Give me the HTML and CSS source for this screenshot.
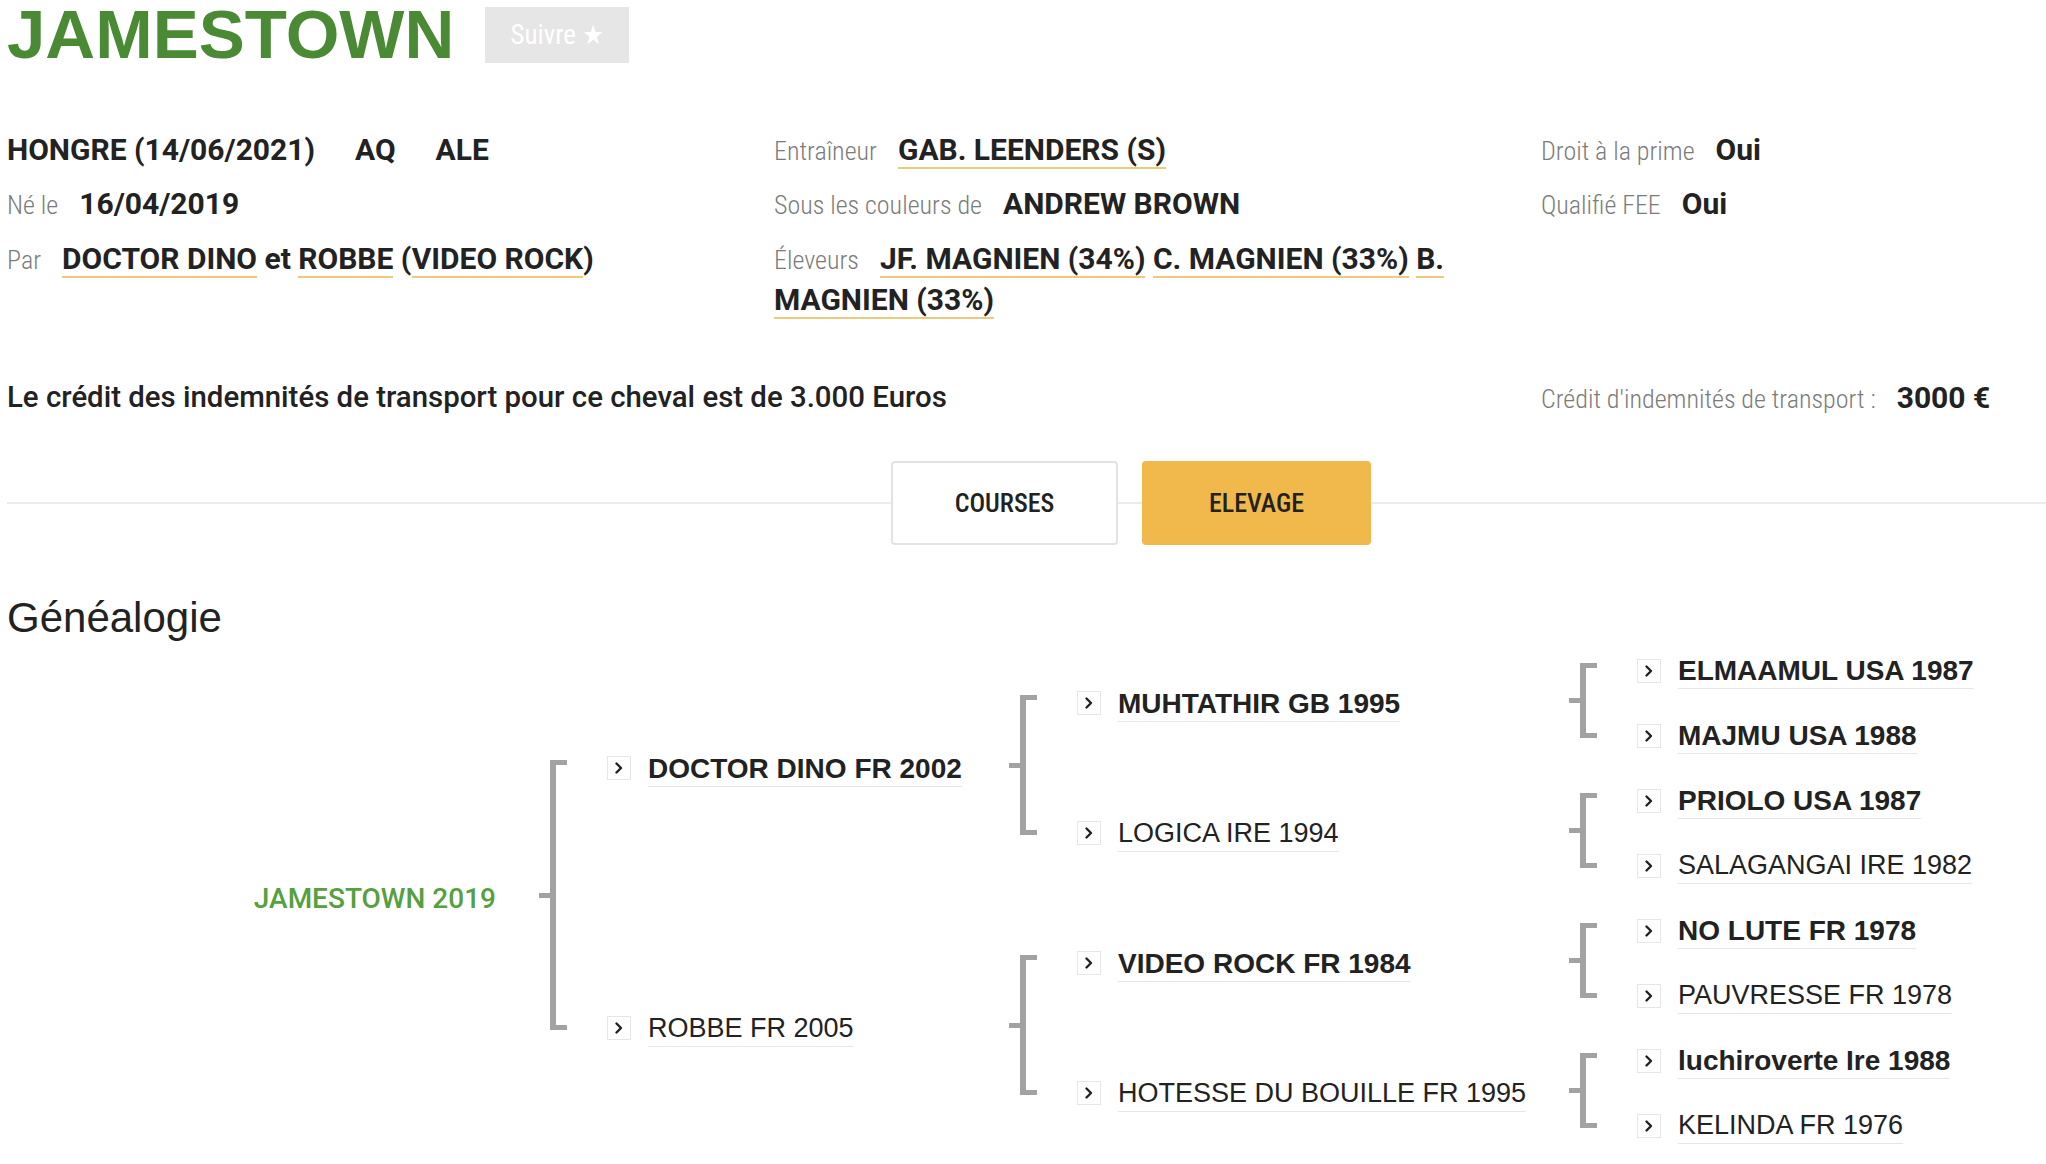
FILE: index.html
```html
<!DOCTYPE html>
<html lang="fr">
<head>
<meta charset="utf-8">
<title>JAMESTOWN</title>
<link rel="stylesheet" href="styles.css">
</head>
<body>
<div class="page">
  <header class="head">
    <h1 class="title">JAMESTOWN</h1>
    <button class="follow">Suivre ★</button>
  </header>

  <section class="info">
    <div class="col">
      <div class="row"><span class="val">HONGRE (14/06/2021)</span><span class="val sp">AQ</span><span class="val sp">ALE</span></div>
      <div class="row"><span class="lbl">Né le</span><span class="val">16/04/2019</span></div>
      <div class="row"><span class="lbl">Par</span><a class="link">DOCTOR DINO</a> et <a class="link">ROBBE</a> (<a class="link">VIDEO ROCK</a>)</div>
    </div>
    <div class="col">
      <div class="row"><span class="lbl">Entraîneur</span><a class="link">GAB. LEENDERS (S)</a></div>
      <div class="row"><span class="lbl">Sous les couleurs de</span><span class="val">ANDREW BROWN</span></div>
      <div class="row"><span class="lbl">Éleveurs</span><a class="link">JF. MAGNIEN (34%)</a> <a class="link">C. MAGNIEN (33%)</a> <a class="link">B.</a> <a class="link">MAGNIEN (33%)</a></div>
    </div>
    <div class="col">
      <div class="row"><span class="lbl">Droit à la prime</span><span class="val">Oui</span></div>
      <div class="row"><span class="lbl">Qualifié FEE</span><span class="val">Oui</span></div>
    </div>
  </section>

  <section class="transport">
    <p class="transport-text">Le crédit des indemnités de transport pour ce cheval est de 3.000 Euros</p>
    <div class="row"><span class="lbl">Crédit d'indemnités de transport :</span><span class="val">3000 €</span></div>
  </section>

  <nav class="tabs">
    <button class="tab">COURSES</button>
    <button class="tab active">ELEVAGE</button>
  </nav>

  <h2 class="gen-title">Généalogie</h2>

  <div class="ped">
    <div class="g0 s8">JAMESTOWN 2019</div>
    <div class="br s8"></div>

    <div class="e s4"><span class="ic"><svg viewBox="0 0 22 22" width="22" height="22"><polyline points="8.5,6.5 13,11 8.5,15.5"/></svg></span><span class="nm b">DOCTOR DINO FR 2002</span></div>
    <div class="e s4"><span class="ic"><svg viewBox="0 0 22 22" width="22" height="22"><polyline points="8.5,6.5 13,11 8.5,15.5"/></svg></span><span class="nm">ROBBE FR 2005</span></div>

    <div class="br s4"></div>
    <div class="br s4"></div>

    <div class="e s2"><span class="ic"><svg viewBox="0 0 22 22" width="22" height="22"><polyline points="8.5,6.5 13,11 8.5,15.5"/></svg></span><span class="nm b">MUHTATHIR GB 1995</span></div>
    <div class="e s2"><span class="ic"><svg viewBox="0 0 22 22" width="22" height="22"><polyline points="8.5,6.5 13,11 8.5,15.5"/></svg></span><span class="nm">LOGICA IRE 1994</span></div>
    <div class="e s2"><span class="ic"><svg viewBox="0 0 22 22" width="22" height="22"><polyline points="8.5,6.5 13,11 8.5,15.5"/></svg></span><span class="nm b">VIDEO ROCK FR 1984</span></div>
    <div class="e s2"><span class="ic"><svg viewBox="0 0 22 22" width="22" height="22"><polyline points="8.5,6.5 13,11 8.5,15.5"/></svg></span><span class="nm">HOTESSE DU BOUILLE FR 1995</span></div>

    <div class="br s2"></div>
    <div class="br s2"></div>
    <div class="br s2"></div>
    <div class="br s2"></div>

    <div class="e s1"><span class="ic"><svg viewBox="0 0 22 22" width="22" height="22"><polyline points="8.5,6.5 13,11 8.5,15.5"/></svg></span><span class="nm b">ELMAAMUL USA 1987</span></div>
    <div class="e s1"><span class="ic"><svg viewBox="0 0 22 22" width="22" height="22"><polyline points="8.5,6.5 13,11 8.5,15.5"/></svg></span><span class="nm b">MAJMU USA 1988</span></div>
    <div class="e s1"><span class="ic"><svg viewBox="0 0 22 22" width="22" height="22"><polyline points="8.5,6.5 13,11 8.5,15.5"/></svg></span><span class="nm b">PRIOLO USA 1987</span></div>
    <div class="e s1"><span class="ic"><svg viewBox="0 0 22 22" width="22" height="22"><polyline points="8.5,6.5 13,11 8.5,15.5"/></svg></span><span class="nm">SALAGANGAI IRE 1982</span></div>
    <div class="e s1"><span class="ic"><svg viewBox="0 0 22 22" width="22" height="22"><polyline points="8.5,6.5 13,11 8.5,15.5"/></svg></span><span class="nm b">NO LUTE FR 1978</span></div>
    <div class="e s1"><span class="ic"><svg viewBox="0 0 22 22" width="22" height="22"><polyline points="8.5,6.5 13,11 8.5,15.5"/></svg></span><span class="nm">PAUVRESSE FR 1978</span></div>
    <div class="e s1"><span class="ic"><svg viewBox="0 0 22 22" width="22" height="22"><polyline points="8.5,6.5 13,11 8.5,15.5"/></svg></span><span class="nm b">luchiroverte Ire 1988</span></div>
    <div class="e s1"><span class="ic"><svg viewBox="0 0 22 22" width="22" height="22"><polyline points="8.5,6.5 13,11 8.5,15.5"/></svg></span><span class="nm">KELINDA FR 1976</span></div>
  </div>
</div>
</body>
</html>
```

FILE: styles.css
```css
:root {
  --cond: "Roboto Condensed", "Liberation Sans Narrow", "DejaVu Sans Condensed", sans-serif;
  --grot: Roboto, "Liberation Sans", sans-serif;
}

html, body {
  margin: 0;
  background: #fff;
}

body {
  font-family: "Liberation Sans", Arial, sans-serif;
  color: #222;
  overflow: hidden;
}

.page {
  padding-left: 7px;
}

/* Header */
.head {
  display: flex;
  align-items: flex-start;
  gap: 31px;
  height: 70px;
}

.title {
  margin: 0;
  font: 700 69px/70px "Liberation Sans", Arial, sans-serif;
  color: #4a8a34;
}

.follow {
  margin-top: 7px;
  width: 144px;
  height: 56px;
  padding: 0;
  border: 0;
  background: #e6e6e6;
  color: #fff;
  font-family: var(--cond);
  font-stretch: condensed;
  font-size: 27px;
  line-height: 56px;
}

/* Info grid */
.info {
  display: grid;
  grid-template-columns: 767px 767px 1fr;
  margin-top: 58.5px;
}

.row {
  font-family: var(--grot);
  font-weight: 700;
  font-size: 30px;
  line-height: 41px;
  color: #222;
  margin-bottom: 13.5px;
}

.row:last-child {
  margin-bottom: 0;
}

.lbl {
  font-family: var(--cond);
  font-stretch: condensed;
  font-weight: 300;
  font-size: 26px;
  line-height: 1;
  color: #7b7b7b;
  margin-right: 21px;
}

.sp {
  margin-left: 40px;
}

.link {
  color: inherit;
  text-decoration: none;
  border-bottom: 2px solid #f0ca7c;
}

/* Transport */
.transport {
  display: grid;
  grid-template-columns: 1534px 1fr;
  margin-top: 57px;
}

.transport-text {
  margin: 0;
  font-family: var(--grot);
  font-weight: 500;
  font-size: 29.4px;
  line-height: 41px;
  color: #222;
}

/* Tabs */
.tabs {
  position: relative;
  display: flex;
  gap: 24px;
  padding-left: 884px;
  margin-top: 43.5px;
}

.tabs::before {
  content: "";
  position: absolute;
  left: 0;
  right: 0;
  top: 41px;
  height: 2px;
  background: #ececec;
}

.tab {
  position: relative;
  width: 227px;
  height: 84px;
  padding: 0;
  background: #fff;
  border: 2px solid #e3e3e3;
  border-radius: 4px;
  font-family: var(--cond);
  font-stretch: condensed;
  font-weight: 500;
  font-size: 26px;
  color: #222;
}

.tab.active {
  width: 229px;
  background: #f1b94b;
  border-color: #f1b94b;
}

/* Genealogy */
.gen-title {
  margin: 52.4px 0 0;
  font: 400 42px/42px "Liberation Sans", Arial, sans-serif;
  color: #222;
}

.ped {
  display: grid;
  grid-template-columns: 532px 28px 442px 28px 532px 28px 1fr;
  grid-template-rows: repeat(8, 65px);
  grid-auto-flow: column;
  margin-top: -1px;
}

.s1 { grid-row: span 1; --n: 1; }
.s2 { grid-row: span 2; --n: 2; }
.s4 { grid-row: span 4; --n: 4; }
.s8 { grid-row: span 8; --n: 8; }

.g0 {
  display: flex;
  align-items: center;
  justify-content: flex-end;
  padding-right: 43px;
  font-family: var(--grot);
  font-weight: 500;
  font-size: 28px;
  color: #55a040;
}

.br {
  position: relative;
  box-sizing: border-box;
  margin: calc(var(--n) * 16.25px - 8px) 0 calc(var(--n) * 16.25px - 2px) 11px;
  border-left: 6px solid #a2a2a2;
  border-top: 5px solid #a2a2a2;
  border-bottom: 5px solid #a2a2a2;
}

.br::before {
  content: "";
  position: absolute;
  left: -17px;
  top: 50%;
  width: 11px;
  height: 5px;
  margin-top: -2.5px;
  background: #a2a2a2;
}

.e {
  display: flex;
  align-items: center;
  padding-left: 40px;
}

.ic {
  flex: none;
  box-sizing: border-box;
  width: 24px;
  height: 24px;
  border: 1px solid #e6e6e6;
  margin-right: 17px;
  display: flex;
  align-items: center;
  justify-content: center;
}

.ic svg polyline {
  fill: none;
  stroke: #222;
  stroke-width: 2.4;
  stroke-linecap: round;
  stroke-linejoin: round;
}

.nm {
  font-family: "Liberation Sans", Arial, sans-serif;
  font-size: 27px;
  line-height: 31px;
  padding-bottom: 2px;
  margin-top: 3px;
  color: #222;
  border-bottom: 1px solid #e6e6e6;
  white-space: nowrap;
}

.nm.b {
  font-weight: 700;
  font-size: 28px;
}
```
